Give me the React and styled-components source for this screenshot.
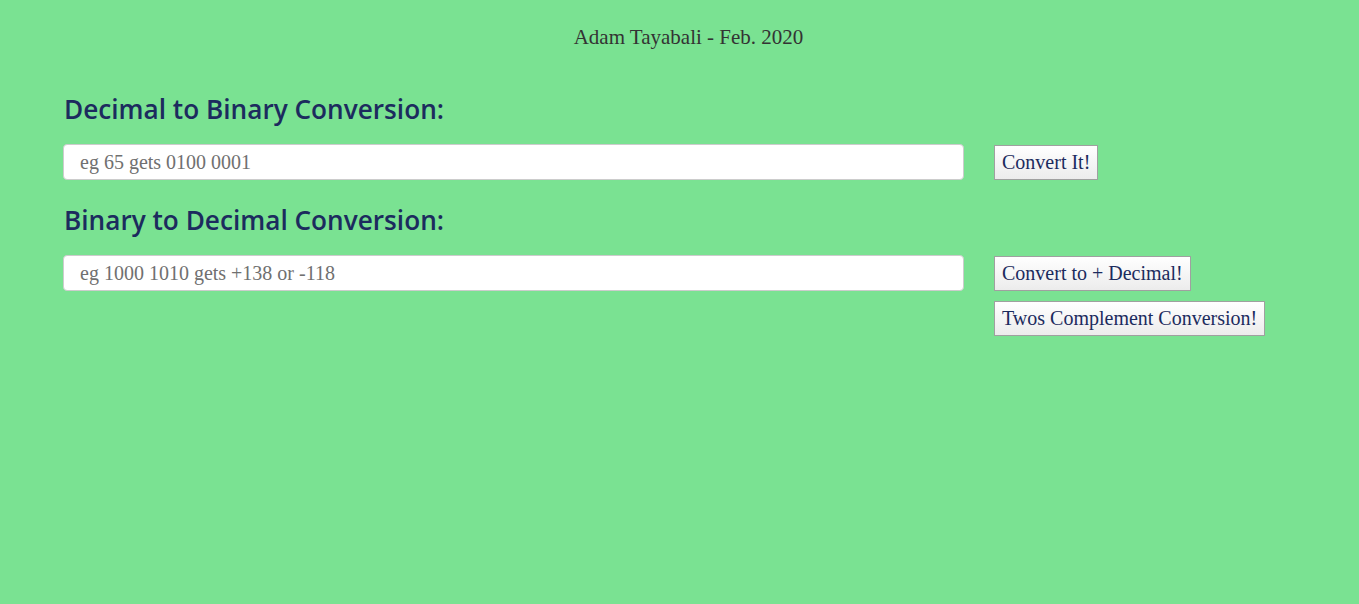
import styled, { createGlobalStyle } from 'styled-components';

// ========================================
// GLOBAL STYLES
// ========================================

const GlobalStyle = createGlobalStyle`
  html, body {
    margin: 0;
    padding: 0;
    background-color: #7ae292;
  }
`;

// ========================================
// STYLED COMPONENTS
// ========================================

const Page = styled.div`
  min-height: 604px;
  background-color: #7ae292;
  padding: 0 63px;
  box-sizing: border-box;
`;

const Byline = styled.p`
  margin: 0;
  padding: 25px 0 0 18px;
  text-align: center;
  font-family: "Liberation Serif", serif;
  font-size: 21px;
  line-height: 24px;
  color: #333;
`;

// One conversion block: heading + input row
const Converter = styled.section`
  margin-top: ${props => props.$top || 0}px;
`;

const Heading = styled.h2`
  margin: 0 0 18px 1px;
  font-family: "Open Sans", "Noto Sans", sans-serif;
  font-weight: 600;
  font-size: 26.2px;
  line-height: 34px;
  color: #1c2b5e;
`;

const Row = styled.div`
  display: flex;
  align-items: flex-start;
  gap: 30px;
`;

const TextInput = styled.input`
  width: 901px;
  height: 36px;
  box-sizing: border-box;
  padding: 0 16px;
  border: 1px solid #ccc;
  border-radius: 4px;
  background: white;
  font-family: "Liberation Serif", serif;
  font-size: 20px;
  color: #333;
  outline: none;

  &::placeholder {
    color: #707070;
  }
`;

const Actions = styled.div`
  display: flex;
  flex-direction: column;
  align-items: flex-start;
  gap: 10px;
  padding-top: 1px;
`;

const Button = styled.button`
  height: 35px;
  padding: 0 7px;
  border: 1px solid #a0a0a0;
  border-radius: 0;
  background: linear-gradient(#ffffff, #ececec);
  font-family: "Liberation Serif", serif;
  font-size: 20px;
  color: #1c2b5e;
  cursor: pointer;
`;

// ========================================
// APP
// ========================================

const App = () => {
  return (
    <>
      <GlobalStyle />
      <Page>
        <Byline>Adam Tayabali - Feb. 2020</Byline>

        <Converter $top={43}>
          <Heading>Decimal to Binary Conversion:</Heading>
          <Row>
            <TextInput placeholder="eg 65 gets 0100 0001" />
            <Actions>
              <Button>Convert It!</Button>
            </Actions>
          </Row>
        </Converter>

        <Converter $top={23}>
          <Heading>Binary to Decimal Conversion:</Heading>
          <Row>
            <TextInput placeholder="eg 1000 1010 gets +138 or -118" />
            <Actions>
              <Button>Convert to + Decimal!</Button>
              <Button>Twos Complement Conversion!</Button>
            </Actions>
          </Row>
        </Converter>
      </Page>
    </>
  );
};

export default App;
